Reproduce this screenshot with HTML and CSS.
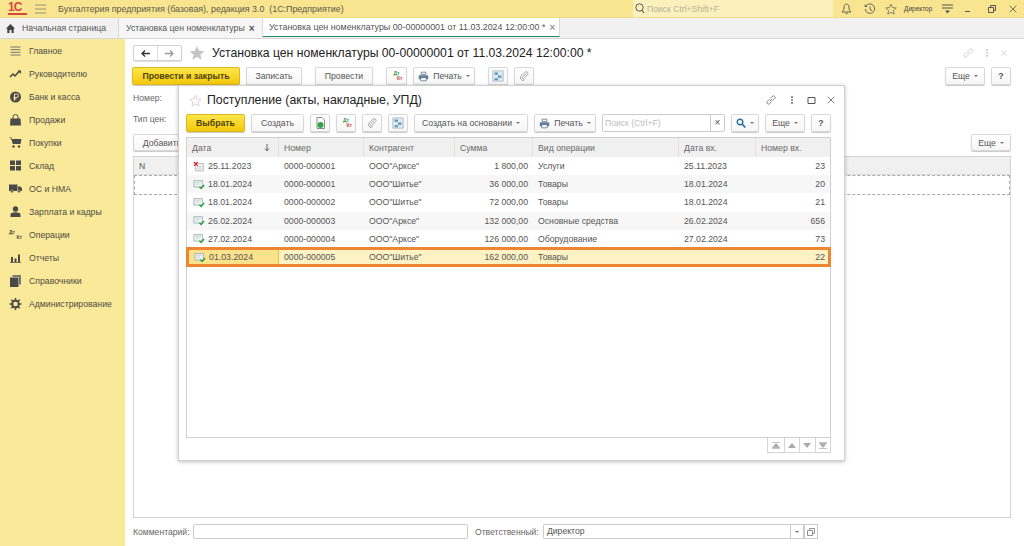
FILE: index.html
```html
<!DOCTYPE html>
<html lang="ru">
<head>
  <meta charset="UTF-8">
  <title>Бухгалтерия предприятия</title>
  <link rel="stylesheet" href="styles.css">
</head>
<body>
  <svg class="defs" width="0" height="0">
    <symbol id="link" viewBox="0 0 12 12"><path d="M5 7l2-2M4.500 5.200L2.400 7.300a1.600 1.600 0 0 0 2.300 2.300l2.100-2.100M5.200 4.500l2.100-2.100a1.600 1.600 0 0 1 2.300 2.300L7.500 6.800" fill="none" stroke="currentColor" stroke-width=".8"/></symbol>
    <symbol id="kebab" viewBox="0 0 12 12"><path d="M5 1.500h2v2H5zM5 5h2v2H5zM5 8.500h2v2H5z" fill="currentColor"/></symbol>
    <symbol id="close" viewBox="0 0 12 12"><path d="M2 2l8 8M10 2l-8 8" fill="none" stroke="currentColor" stroke-width="1"/></symbol>
    <symbol id="star" viewBox="0 0 16 16"><path d="M8 1l2.100 4.800 5.200.5-3.900 3.400 1.200 5.100L8 12.100l-4.600 2.700 1.200-5.100L.7 6.300l5.200-.5z" fill="currentColor"/></symbol>
    <symbol id="star-line" viewBox="0 0 16 16"><path d="M8 1.500l2 4.600 5 .5-3.800 3.300 1.100 4.900L8 12.300l-4.300 2.500 1.100-4.900L1 6.600l5-.5z" fill="none" stroke="currentColor" stroke-width=".9"/></symbol>
    <symbol id="printer" viewBox="0 0 14 14"><path d="M4 1.500h6v3H4z" fill="#fff" stroke="#5c6f85"/><path d="M1 5.500h12v5H1z" fill="#5c7a99"/><path d="M3.500 8.500h7v4h-7z" fill="#fff" stroke="#5c6f85"/></symbol>
    <symbol id="clip" viewBox="0 0 14 14"><path d="M10.500 3.500L5 9a1.300 1.300 0 0 0 1.900 1.900l5-5.200a2.500 2.500 0 0 0-3.600-3.500L3 7.600a3.500 3.500 0 0 0 5 5" fill="none" stroke="#a0a0a0" stroke-width="1.300" transform="translate(0 -.5)"/></symbol>
    <symbol id="struct" viewBox="0 0 14 14"><path d="M1 1h12v12H1z" fill="#dfeaf3" stroke="#a5bccd"/><path d="M3 3h4v2.500H3zM7 6.500h4V9H7zM3 9.500h4V12H3z" fill="#5f93b8"/></symbol>
    <symbol id="doc-ok" viewBox="0 0 14 12"><path d="M1 1.500h10v7.500H1z" fill="#eef3f3" stroke="#9db0b4"/><path d="M3 3.500h6M3 5.500h4" stroke="#c0ccce" stroke-width=".8"/><path d="M7.500 8.500l2 2 3.500-4" fill="none" stroke="#2c9f3c" stroke-width="1.700"/></symbol>
    <symbol id="doc-del" viewBox="0 0 14 12"><path d="M3 2.500h9v8.500H3z" fill="#f2f2f2" stroke="#a9b2b5"/><path d="M5 6h5M5 8h5" stroke="#c0c6c8" stroke-width=".8"/><path d="M1 .8l4.500 4.500M5.500 .8L1 5.300" stroke="#d2282e" stroke-width="1.400"/></symbol>
  </svg>

  <header class="topbar">
    <span class="logo">1С</span>
    <svg class="burger" width="11" height="10" viewBox="0 0 11 10"><path d="M0 1h11M0 5h11M0 9h11" stroke="#96907a" stroke-width="1"/></svg>
    <span class="app-title">Бухгалтерия предприятия (базовая), редакция 3.0&nbsp; (1С:Предприятие)</span>
    <div class="global-search">
      <svg width="10" height="11" viewBox="0 0 10 11"><circle cx="4.500" cy="4.500" r="3.700" fill="none" stroke="#555" stroke-width="1"/><path d="M7 7.500l2 2.500" stroke="#555" stroke-width="1.200"/></svg>
      <span>Поиск Ctrl+Shift+F</span>
    </div>
    <div class="top-icons">
      <svg width="11" height="12" viewBox="0 0 11 12"><path d="M5.500 1C3.500 1 3 3 3 5c0 2-1.500 3.500-2 4h9c-.5-.5-2-2-2-4 0-2-.5-4-2.500-4zM4.500 10.500h2" fill="none" stroke="#555" stroke-width=".9"/></svg>
      <svg class="icon-history" width="12" height="12" viewBox="0 0 12 12"><path d="M2 3a4.700 4.700 0 1 1-.8 3M1 1.500V3.500h2M6 3.500V6.500l2 1" fill="none" stroke="#555" stroke-width=".9"/></svg>
      <svg class="icon-star" width="12" height="12"><use href="#star-line"/></svg>
      <span class="user">Директор</span>
      <svg class="icon-menu" width="11" height="10" viewBox="0 0 11 10"><path d="M0 1h11M0 4h11" stroke="#555"/><path d="M3 6.500h5L5.500 9.500z" fill="#555"/></svg>
      <span class="win-min"></span>
      <svg class="icon-restore" width="8" height="8" viewBox="0 0 8 8"><path d="M2.500 2V.5h5v5H6M.5 2.500h5v5h-5z" fill="none" stroke="#555"/></svg>
      <svg class="icon-x" width="10" height="10"><use href="#close"/></svg>
    </div>
  </header>

  <nav class="tabs">
    <div class="tab tab-home">
      <svg width="9" height="9" viewBox="0 0 9 9"><path d="M4.500 0L9 4.500H7.700V9H5.500V6h-2v3H1.300V4.500H0z" fill="#444"/></svg>
      <span>Начальная страница</span>
    </div>
    <div class="tab tab-doc"><span>Установка цен номенклатуры</span><b>×</b></div>
    <div class="tab tab-active"><span>Установка цен номенклатуры 00-00000001 от 11.03.2024 12:00:00 *</span><b>×</b></div>
  </nav>

  <div class="workspace">
    <aside class="sidebar">
      <div class="side-item">
        <svg width="12" height="10" viewBox="0 0 12 10"><path d="M1 1h10M1 3.700h10M1 6.300h10M1 9h10" stroke="#777" stroke-width="1"/></svg>
        <span>Главное</span>
      </div>
      <div class="side-item">
        <svg width="12" height="8" viewBox="0 0 12 8"><path d="M.5 7l3-3 2 2 4.500-5" fill="none" stroke="#444" stroke-width="1.500"/><path d="M8 .5h3.500V4z" fill="#444"/></svg>
        <span>Руководителю</span>
      </div>
      <div class="side-item">
        <svg width="12" height="12" viewBox="0 0 12 12"><circle cx="6" cy="6" r="5.500" fill="#4a4a4a"/><path d="M5 9.500V3h2.200a1.700 1.700 0 0 1 0 3.500H4M4 8h3" fill="none" stroke="#fbe99a" stroke-width="1"/></svg>
        <span>Банк и касса</span>
      </div>
      <div class="side-item">
        <svg width="12" height="12" viewBox="0 0 12 12"><path d="M1 4.500h10l.5 7H.5z" fill="#4a4a4a"/><path d="M3.500 5V3a2.500 2.500 0 0 1 5 0v2" fill="none" stroke="#4a4a4a"/></svg>
        <span>Продажи</span>
      </div>
      <div class="side-item">
        <svg width="12" height="11" viewBox="0 0 12 11"><path d="M0 .5h2l.5 1.500H12l-1 5H3.300L1.500 1.200H0z" fill="#4a4a4a"/><circle cx="4" cy="9.500" r="1.200" fill="#4a4a4a"/><circle cx="9.500" cy="9.500" r="1.200" fill="#4a4a4a"/></svg>
        <span>Покупки</span>
      </div>
      <div class="side-item">
        <svg width="12" height="11" viewBox="0 0 12 11"><path d="M.5.500h5v4.500h-5zM6.500.5h5v4.500h-5zM.5 6h5v4.500h-5zM6.500 6h5v4.500h-5z" fill="#4a4a4a"/></svg>
        <span>Склад</span>
      </div>
      <div class="side-item">
        <svg width="13" height="9" viewBox="0 0 13 9"><path d="M0 .5h8.500V7H0zM9 2.500h2.500L13 4.500V7H9z" fill="#4a4a4a"/><circle cx="3" cy="7.500" r="1.400" fill="#4a4a4a" stroke="#fbe99a" stroke-width=".5"/><circle cx="10" cy="7.500" r="1.400" fill="#4a4a4a" stroke="#fbe99a" stroke-width=".5"/></svg>
        <span>ОС и НМА</span>
      </div>
      <div class="side-item">
        <svg width="11" height="11" viewBox="0 0 11 11"><circle cx="5.500" cy="3" r="2.700" fill="#4a4a4a"/><path d="M.5 11V8.500c0-1.500 2-2.200 5-2.200s5 .7 5 2.200V11z" fill="#4a4a4a"/></svg>
        <span>Зарплата и кадры</span>
      </div>
      <div class="side-item">
        <span class="dt-kt"><i>Дт</i><i>Кт</i></span>
        <span>Операции</span>
      </div>
      <div class="side-item">
        <svg width="11" height="10" viewBox="0 0 11 10"><path d="M1 4h2v5H1zM4.500 5.500h2V9h-2zM8 1.500h2V9H8zM0 9.300h11v.7H0z" fill="#4a4a4a"/></svg>
        <span>Отчеты</span>
      </div>
      <div class="side-item">
        <svg width="11" height="12" viewBox="0 0 11 12"><path d="M2.500 0H11v9.500H9V2H2.500z" fill="#777"/><path d="M0 2.500h8.500V12H0z" fill="#4a4a4a"/></svg>
        <span>Справочники</span>
      </div>
      <div class="side-item">
        <svg width="12" height="12" viewBox="0 0 12 12"><circle cx="6" cy="6" r="3.300" fill="none" stroke="#4a4a4a" stroke-width="2"/><path d="M6 0v2.500M6 9.500V12M0 6h2.500M9.500 6H12M1.800 1.800l1.800 1.800M8.400 8.400l1.800 1.800M10.200 1.800L8.400 3.600M3.600 8.400l-1.800 1.800" stroke="#4a4a4a" stroke-width="1.600"/></svg>
        <span>Администрирование</span>
      </div>
    </aside>

    <main class="form">
      <div class="form-head">
        <div class="nav-pair">
          <span class="nav-btn"><svg width="9" height="7" viewBox="0 0 9 7"><path d="M9 3.500H2M4 .5L1 3.500l3 3" fill="none" stroke="#333" stroke-width="1.300"/></svg></span>
          <span class="nav-btn"><svg width="9" height="7" viewBox="0 0 9 7"><path d="M0 3.500h7M5 .5l3 3-3 3" fill="none" stroke="#999" stroke-width="1.300"/></svg></span>
        </div>
        <svg class="head-star" width="16" height="16"><use href="#star"/></svg>
        <h1 class="form-title">Установка цен номенклатуры 00-00000001 от 11.03.2024 12:00:00 *</h1>
        <div class="head-icons">
          <svg width="12" height="12"><use href="#link"/></svg>
          <svg width="10" height="10"><use href="#kebab"/></svg>
          <svg width="8" height="8"><use href="#close"/></svg>
        </div>
      </div>

      <div class="toolbar">
        <button class="btn btn-primary w-post-close">Провести и закрыть</button>
        <button class="btn w-save">Записать</button>
        <button class="btn w-post sep">Провести</button>
        <button class="btn w-icon-wide sep"><span class="dt-kt dt-color"><i>Дт</i><i>Кт</i></span></button>
        <button class="btn w-print"><svg width="11" height="11"><use href="#printer"/></svg>Печать<i class="caret"></i></button>
        <button class="btn w-icon sep"><svg width="12" height="12"><use href="#struct"/></svg></button>
        <button class="btn w-icon"><svg width="10" height="10"><use href="#clip"/></svg></button>
        <button class="btn w-more push">Еще<i class="caret"></i></button>
        <button class="btn w-icon"><b>?</b></button>
      </div>

      <div class="field-row">Номер:</div>
      <div class="field-row">Тип цен:</div>

      <div class="toolbar table-bar">
        <button class="btn w-add">Добавить</button>
        <button class="btn w-more push">Еще<i class="caret"></i></button>
      </div>

      <div class="items">
        <div class="items-head">N</div>
        <div class="items-row"></div>
      </div>

      <div class="form-foot">
        <label class="foot-label">Комментарий:</label>
        <span class="input comment-input"></span>
        <label class="foot-label owner-label">Ответственный:</label>
        <span class="input owner-input">Директор</span>
        <span class="input-btn"><i class="caret"></i></span>
        <span class="input-btn"><svg width="8" height="8" viewBox="0 0 8 8"><path d="M2.500 2V.5h5v5H6M.5 2.500h5v5h-5z" fill="none" stroke="#777" stroke-width=".8"/></svg></span>
      </div>

      <section class="modal">
        <div class="modal-head">
          <svg class="modal-star" width="13" height="13"><use href="#star-line"/></svg>
          <h2 class="modal-title">Поступление (акты, накладные, УПД)</h2>
          <div class="modal-icons">
            <svg width="12" height="12"><use href="#link"/></svg>
            <svg width="10" height="10"><use href="#kebab"/></svg>
            <svg width="9" height="9" viewBox="0 0 9 9"><path d="M1 1.500h7v6H1z" fill="none" stroke="#555"/></svg>
            <svg width="10" height="10"><use href="#close"/></svg>
          </div>
        </div>

        <div class="toolbar modal-bar">
          <button class="btn btn-primary w-select">Выбрать</button>
          <button class="btn w-create">Создать</button>
          <button class="btn w-icon"><svg width="11" height="12" viewBox="0 0 11 12"><path d="M2 .5h5l2.500 2.500v8.500H2z" fill="#fff" stroke="#7a9a80"/><circle cx="5.500" cy="8" r="3" fill="#33a04a"/></svg></button>
          <button class="btn w-icon"><span class="dt-kt dt-color"><i>Дт</i><i>Кт</i></span></button>
          <button class="btn w-icon"><svg width="10" height="10"><use href="#clip"/></svg></button>
          <button class="btn w-icon"><svg width="12" height="12"><use href="#struct"/></svg></button>
          <button class="btn w-basis">Создать на основании<i class="caret"></i></button>
          <button class="btn w-print"><svg width="11" height="11"><use href="#printer"/></svg>Печать<i class="caret"></i></button>
          <div class="search">
            <span class="search-text">Поиск (Ctrl+F)</span>
            <span class="search-clear">×</span>
          </div>
          <button class="btn w-find"><svg width="10" height="10" viewBox="0 0 10 10"><circle cx="4" cy="4" r="2.800" fill="none" stroke="#2a6f9e" stroke-width="1.400"/><path d="M6 6l3.300 3.300" stroke="#2a6f9e" stroke-width="1.700"/></svg><i class="caret"></i></button>
          <button class="btn w-more">Еще<i class="caret"></i></button>
          <button class="btn w-icon"><b>?</b></button>
        </div>

        <div class="grid">
          <div class="row row-head">
            <div class="cell">Дата<svg class="sort" width="6" height="8" viewBox="0 0 6 8"><path d="M3 0v6M1 4.500L3 7l2-2.500" fill="none" stroke="#666"/></svg></div>
            <div class="cell">Номер</div>
            <div class="cell">Контрагент</div>
            <div class="cell">Сумма</div>
            <div class="cell">Вид операции</div>
            <div class="cell">Дата вх.</div>
            <div class="cell">Номер вх.</div>
          </div>
          <div class="row">
            <div class="cell cell-date"><svg width="12" height="11"><use href="#doc-del"/></svg>25.11.2023</div>
            <div class="cell">0000-000001</div><div class="cell">ООО"Арксе"</div><div class="cell num">1 800,00</div>
            <div class="cell">Услуги</div><div class="cell">25.11.2023</div><div class="cell num">23</div>
          </div>
          <div class="row">
            <div class="cell cell-date"><svg width="12" height="11"><use href="#doc-ok"/></svg>18.01.2024</div>
            <div class="cell">0000-000001</div><div class="cell">ООО"Шитье"</div><div class="cell num">36 000,00</div>
            <div class="cell">Товары</div><div class="cell">18.01.2024</div><div class="cell num">20</div>
          </div>
          <div class="row">
            <div class="cell cell-date"><svg width="12" height="11"><use href="#doc-ok"/></svg>18.01.2024</div>
            <div class="cell">0000-000002</div><div class="cell">ООО"Шитье"</div><div class="cell num">72 000,00</div>
            <div class="cell">Товары</div><div class="cell">18.01.2024</div><div class="cell num">21</div>
          </div>
          <div class="row">
            <div class="cell cell-date"><svg width="12" height="11"><use href="#doc-ok"/></svg>26.02.2024</div>
            <div class="cell">0000-000003</div><div class="cell">ООО"Арксе"</div><div class="cell num">132 000,00</div>
            <div class="cell">Основные средства</div><div class="cell">26.02.2024</div><div class="cell num">656</div>
          </div>
          <div class="row">
            <div class="cell cell-date"><svg width="12" height="11"><use href="#doc-ok"/></svg>27.02.2024</div>
            <div class="cell">0000-000004</div><div class="cell">ООО"Арксе"</div><div class="cell num">126 000,00</div>
            <div class="cell">Оборудование</div><div class="cell">27.02.2024</div><div class="cell num">73</div>
          </div>
          <div class="row row-selected">
            <div class="cell cell-date cell-current"><svg width="12" height="11"><use href="#doc-ok"/></svg>01.03.2024</div>
            <div class="cell">0000-000005</div><div class="cell">ООО"Шитье"</div><div class="cell num">162 000,00</div>
            <div class="cell">Товары</div><div class="cell"></div><div class="cell num">22</div>
          </div>
        </div>

        <div class="pager">
          <span class="page-btn"><svg width="8" height="7" viewBox="0 0 8 7"><path d="M0 6.500h8M4 1.500l3.500 4h-7zM0 .5h8" fill="#aaa" stroke="#aaa" stroke-width=".7"/></svg></span>
          <span class="page-btn"><svg width="8" height="5" viewBox="0 0 8 5"><path d="M4 0l4 5H0z" fill="#aaa"/></svg></span>
          <span class="page-btn"><svg width="8" height="5" viewBox="0 0 8 5"><path d="M4 5L8 0H0z" fill="#aaa"/></svg></span>
          <span class="page-btn"><svg width="8" height="7" viewBox="0 0 8 7"><path d="M0 .5h8M4 5.500l3.500-4h-7zM0 6.500h8" fill="#aaa" stroke="#aaa" stroke-width=".7"/></svg></span>
        </div>
      </section>
    </main>
  </div>
</body>
</html>
```

FILE: styles.css
```css
* {
  margin: 0;
  padding: 0;
  box-sizing: border-box;
}
html, body {
  height: 100%;
  overflow: hidden;
  background-color: #fff;
}
body {
  display: flex;
  flex-direction: column;
  font: 8.6px "Liberation Sans", Arial, sans-serif;
  color: #555;
}
.defs {
  position: absolute;
}

/* верхняя полоса */
.topbar {
  display: flex;
  align-items: center;
  flex: 0 0 18px;
  padding-left: 8px;
  background-color: #f9e58f;
  border-bottom: 1px solid #f1dc84;
}
.logo {
  width: 19px;
  font: bold 12px/11px "Liberation Sans", sans-serif;
  letter-spacing: -1px;
  color: #d8463c;
  border-bottom: 2px solid #d8463c;
}
.burger {
  margin-left: 8px;
}
.app-title {
  margin-left: 12px;
  font-size: 8.9px;
  color: #5b5a4c;
}
.global-search {
  display: flex;
  align-items: center;
  gap: 2px;
  align-self: stretch;
  width: 200px;
  margin-left: auto;
  padding-left: 2px;
  background-color: #fcf0bd;
  color: #b6b29a;
}
.top-icons {
  display: flex;
  align-items: center;
  width: 191px;
  padding-left: 8px;
}
.top-icons > svg {
  color: #555;
  margin-right: 12px;
}
.top-icons .icon-history {
  margin-right: 9px;
}
.top-icons .icon-star {
  margin-right: 7px;
}
.top-icons .icon-x {
  margin-right: 0;
}
.user {
  width: 30px;
  margin-right: 8px;
  font-size: 6.5px;
  color: #444;
}
.win-min {
  width: 5px;
  height: 1px;
  margin: 5px 18px 0 0;
  background-color: #555;
}

/* вкладки */
.tabs {
  display: flex;
  flex: 0 0 21px;
  background-color: #f1f1f1;
  border-bottom: 1px solid #d6d6d6;
}
.tab {
  display: flex;
  align-items: center;
  font-size: 8.7px;
  border-right: 1px solid #d8d8d8;
}
.tab b {
  margin-left: 4px;
  font-size: 10px;
}
.tab-home {
  gap: 7px;
  width: 119px;
  padding-left: 6px;
}
.tab-doc {
  width: 144px;
  padding-left: 7px;
  background-color: #f6f6f6;
}
.tab-active {
  width: 297px;
  padding: 0 3px 0 6px;
  font-size: 8.9px;
  background-color: #fff;
  border-bottom: 1px solid #1f8a70;
  margin-bottom: 1px;
}
.tab-active b {
  color: #999;
}

/* основная часть */
.workspace {
  display: flex;
  flex: 1;
  min-height: 0;
}
.sidebar {
  flex: 0 0 125px;
  background-color: #fbe99a;
}
.side-item {
  display: flex;
  align-items: center;
  height: 23px;
  padding-left: 9px;
  font-size: 8.7px;
  color: #4d4d45;
}
.side-item > svg, .side-item > .dt-kt {
  flex: 0 0 13px;
  margin-right: 7px;
}
.dt-kt {
  display: flex;
  flex-direction: column;
  width: 12px;
  font-size: 5px;
  line-height: 5px;
}
.dt-kt i {
  font-style: normal;
  font-weight: bold;
}
.dt-kt i + i {
  text-align: right;
}
.dt-color i {
  color: #3a9a50;
}
.dt-color i + i {
  color: #d6453c;
}

/* форма документа */
.form {
  position: relative;
  display: flex;
  flex: 1;
  flex-direction: column;
  min-width: 0;
  padding: 6px 13px 7px 8px;
}
.form-head {
  display: flex;
  align-items: center;
  height: 16px;
}
.nav-pair {
  display: flex;
  width: 49px;
  height: 16px;
  background-color: #fff;
  border: 1px solid #d2d2d2;
  border-radius: 2px;
  box-shadow: 0 1px 1px #ddd;
}
.nav-btn {
  display: flex;
  flex: 1;
  align-items: center;
  justify-content: center;
}
.nav-btn + .nav-btn {
  border-left: 1px solid #ddd;
}
.head-star {
  margin-left: 7px;
  color: #c4c4c4;
}
.form-title {
  margin-left: 7px;
  font-size: 12.2px;
  font-weight: normal;
  color: #222;
}
.head-icons {
  display: flex;
  align-items: center;
  gap: 8px;
  margin-left: auto;
  margin-right: 3px;
  color: #c4c4c4;
}
.toolbar {
  display: flex;
  flex: 0 0 18px;
  gap: 6px;
  margin-top: 6px;
  margin-left: -1px;
}
.btn {
  display: flex;
  align-items: center;
  justify-content: center;
  gap: 4px;
  height: 18px;
  font: 8.7px "Liberation Sans", Arial, sans-serif;
  color: #555;
  background: linear-gradient(#fff, #f6f6f6);
  border: 1px solid #d8d8d8;
  border-radius: 2px;
  box-shadow: 0 1px 1px #c8c8c8;
}
.btn-primary {
  font-weight: bold;
  color: #4d4300;
  background: linear-gradient(#fde64b, #f4c80c);
  border-color: #dcb91c;
}
.caret {
  display: inline-block;
  border: 2px solid transparent;
  border-top: 2.500px solid #777;
  border-bottom: 0;
}
.sep {
  margin-left: 7px;
}
.push {
  margin-left: auto;
}
.w-post-close { width: 108px; }
.w-save { width: 56px; }
.w-post { width: 58px; }
.w-icon { width: 20px; }
.w-icon-wide { width: 21px; }
.w-print { width: 62px; }
.w-more { width: 40px; }
.w-add { width: 58px; }
.w-select { width: 59px; }
.w-create { width: 53px; }
.w-basis { width: 114px; }
.w-find { width: 28px; }
.field-row {
  display: flex;
  align-items: center;
  flex: 0 0 21px;
  color: #666;
}
.toolbar + .field-row {
  margin-top: 2px;
}
.table-bar {
  flex-basis: 17px;
  margin-top: 5px;
  margin-left: 0;
}
.table-bar .btn {
  height: 17px;
}
.items {
  flex: 1;
  margin-top: 5px;
  border: 1px solid #d4d4d4;
}
.items-head {
  display: flex;
  align-items: center;
  height: 18px;
  padding-left: 5px;
  background-color: #f0f0f0;
  border-bottom: 1px solid #ddd;
}
.items-row {
  height: 20px;
  border: 1px dashed #aaa;
}
.form-foot {
  display: flex;
  align-items: center;
  flex: 0 0 15px;
  margin-top: 6px;
}
.foot-label {
  width: 60px;
  color: #666;
}
.owner-label {
  width: 68px;
  margin-left: 7px;
}
.input {
  height: 15px;
  padding: 0 3px;
  line-height: 13px;
  border: 1px solid #ccc;
  border-radius: 2px;
}
.comment-input {
  width: 275px;
}
.owner-input {
  width: 247px;
  border-right: 0;
  border-radius: 2px 0 0 2px;
}
.input-btn {
  display: flex;
  align-items: center;
  justify-content: center;
  width: 14px;
  height: 15px;
  border: 1px solid #ccc;
}

/* окно выбора поверх формы */
.modal {
  position: absolute;
  top: 46px;
  left: 53px;
  display: flex;
  flex-direction: column;
  width: 667px;
  height: 376px;
  padding: 0 13px 7px 7px;
  background-color: #fff;
  border: 1px solid #d0d0d0;
  box-shadow: 0 1px 4px rgba(0, 0, 0, .25);
}
.modal-head {
  display: flex;
  align-items: center;
  flex: 0 0 28px;
}
.modal-star {
  margin-left: 3px;
  color: #c8c8c8;
}
.modal-title {
  margin-left: 5px;
  font-size: 12.3px;
  font-weight: normal;
  color: #222;
}
.modal-icons {
  display: flex;
  align-items: center;
  gap: 10px;
  margin-left: auto;
  margin-right: -5px;
  color: #666;
}
.modal-bar {
  margin-top: 0;
  margin-left: 0;
}
.search {
  display: flex;
  width: 123px;
  height: 18px;
  border: 1px solid #ccc;
  border-radius: 2px;
}
.search-text {
  flex: 1;
  padding-left: 2px;
  line-height: 16px;
  color: #c0c0c0;
}
.search-clear {
  width: 14px;
  line-height: 15px;
  text-align: center;
  font-size: 10px;
  border-left: 1px solid #ccc;
}

/* таблица */
.grid {
  display: flex;
  flex: 1;
  flex-direction: column;
  margin-top: 5px;
  border: 1px solid #d0d0d0;
}
.row {
  position: relative;
  display: grid;
  flex: 0 0 18.2px;
  grid-template-columns: 92px 85px 91px 78px 146px 77px 74px;
  align-items: center;
  font-size: 8.7px;
  color: #555;
}
.row:nth-child(odd) {
  background-color: #f7f7f7;
}
.row-head {
  flex-basis: 19px;
  color: #6a6a6a;
  background-color: #f0f0f0 !important;
}
.row-head .cell {
  position: relative;
  align-self: stretch;
  display: flex;
  align-items: center;
  border-right: 1px solid #e2e2e2;
}
.row-head .cell:last-child {
  border-right: 0;
}
.sort {
  position: absolute;
  right: 8px;
}
.cell {
  padding-left: 5px;
  white-space: nowrap;
}
.num {
  padding-right: 5px;
  text-align: right;
}
.cell-date {
  display: flex;
  align-items: center;
  gap: 3px;
  padding-left: 6px;
  font-size: 8.8px;
}
.row-selected {
  background-color: #fcf2c4 !important;
}
.row-selected::after {
  content: '';
  position: absolute;
  inset: -1px -1px -1px -1px;
  border: 3px solid #ee8533;
}
.cell-current {
  height: 100%;
  background-color: #fbe38c;
  border: 1px solid #e5c33a;
}
.pager {
  display: flex;
  align-self: flex-end;
  height: 15px;
  border: 1px solid #d4d4d4;
  border-top: 0;
}
.page-btn {
  display: flex;
  align-items: center;
  justify-content: center;
  width: 15.500px;
}
.page-btn + .page-btn {
  border-left: 1px solid #d4d4d4;
}
```
